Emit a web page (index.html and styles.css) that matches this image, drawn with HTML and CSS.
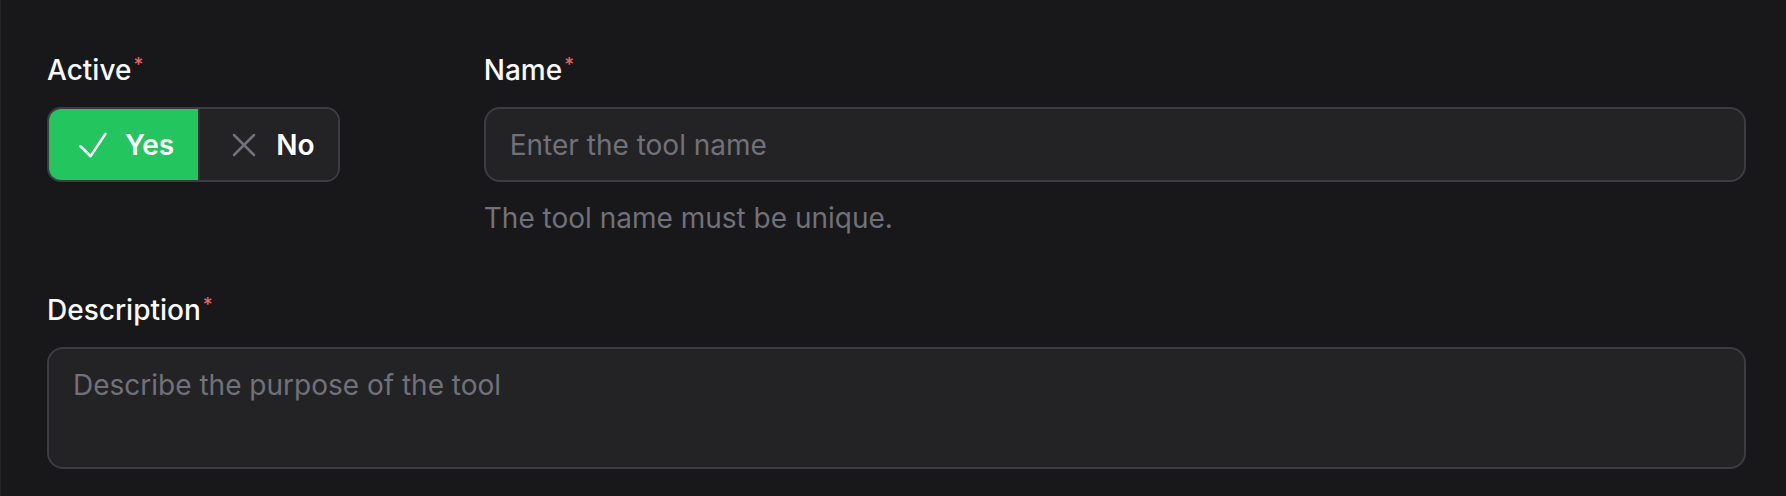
FILE: index.html
```html
<!DOCTYPE html>
<html lang="en">
<head>
<meta charset="utf-8">
<title>Tool form</title>
<link rel="stylesheet" href="styles.css">
</head>
<body>
<main class="page">
  <form class="form">
    <div class="field field-active">
      <label class="label">Active<span class="req">*</span></label>
      <div class="toggle" role="radiogroup">
        <button type="button" class="seg seg-yes">
          <svg class="icon" viewBox="0 0 24 24" fill="none" stroke="currentColor" stroke-width="1.5"><path stroke-linecap="round" stroke-linejoin="round" d="m4.5 12.75 6 6 9-13.5"/></svg>
          <span>Yes</span>
        </button>
        <button type="button" class="seg seg-no">
          <svg class="icon icon-x" viewBox="0 0 24 24" fill="none" stroke="currentColor" stroke-width="1.5"><path stroke-linecap="round" stroke-linejoin="round" d="M6 18 18 6M6 6l12 12"/></svg>
          <span>No</span>
        </button>
      </div>
    </div>
    <div class="field field-name">
      <label class="label" for="name">Name<span class="req">*</span></label>
      <input id="name" class="input" type="text" placeholder="Enter the tool name">
      <p class="help">The tool name must be unique.</p>
    </div>
    <div class="field field-desc">
      <label class="label" for="desc">Description<span class="req">*</span></label>
      <textarea id="desc" class="textarea" placeholder="Describe the purpose of the tool"></textarea>
    </div>
  </form>
</main>
</body>
</html>
```

FILE: styles.css
```css
* { box-sizing: border-box; }

html, body {
  margin: 0;
  padding: 0;
  background: #18181b;
}

body {
  font-family: Inter, "Noto Sans", "Liberation Sans", sans-serif;
  color: #fafafa;
  height: 496px;
  overflow: hidden;
}

.page {
  border-left: 1px solid #232326;
  min-height: 496px;
  padding: 50px 40px 0 46px;
}

.form {
  display: grid;
  grid-template-columns: repeat(4, 1fr);
  column-gap: 48px;
  row-gap: 52px;
}

.field {
  display: flex;
  flex-direction: column;
  align-items: flex-start;
  min-width: 0;
}

.field-active { grid-column: span 1; }
.field-name { grid-column: span 3; align-items: stretch; }
.field-desc { grid-column: span 4; align-items: stretch; }

.label {
  font-size: 28px;
  line-height: 40px;
  font-weight: 500;
  color: #fafafa;
  margin-bottom: 17px;
  display: block;
}

.req {
  color: #ee5f63;
  font-size: 19px;
  line-height: 1;
  vertical-align: 9px;
  margin-left: 2px;
}

.toggle {
  display: inline-flex;
  height: 75px;
  border: 2px solid #3c3c42;
  border-radius: 14px;
  overflow: hidden;
  background: #232326;
}

.seg {
  display: flex;
  align-items: center;
  gap: 12px;
  padding: 0 24px;
  border: 0;
  margin: 0;
  font-family: inherit;
  font-size: 28px;
  font-weight: 600;
  color: #ffffff;
  background: transparent;
  cursor: pointer;
}

.seg-yes {
  background: #22c55e;
  border-right: 2px solid #2e2e33;
}

.seg-no {
  background: #232326;
}

.icon {
  width: 40px;
  height: 40px;
  flex: none;
}

.icon-x { color: #71717a; }

.input,
.textarea {
  width: 100%;
  border: 2px solid #3c3c42;
  border-radius: 16px;
  background: #232326;
  color: #fafafa;
  font-family: inherit;
  font-size: 28px;
  line-height: 40px;
  padding: 0 24px;
  outline: none;
  margin: 0;
}

.input { height: 75px; }

.textarea {
  height: 122px;
  padding: 16px 24px;
  resize: none;
  display: block;
}

.input::placeholder,
.textarea::placeholder {
  color: #71717a;
  opacity: 1;
}

.help {
  margin: 16px 0 0;
  font-size: 28px;
  line-height: 40px;
  color: #71717a;
}
```
